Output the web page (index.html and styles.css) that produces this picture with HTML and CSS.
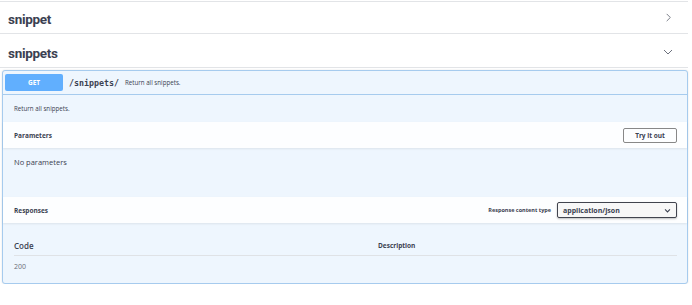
FILE: index.html
```html
<!DOCTYPE html>
<html lang="en">
<head>
  <meta charset="utf-8" />
  <title>Swagger UI</title>
  <link rel="stylesheet" href="styles.css">
</head>
<body>
  <div class="wrapper">
    <div class="prevTag"></div>

    <!-- TAG: snippet (collapsed) -->
    <h3 class="tag">
      <span>snippet</span>
      <svg class="arrow" width="9" height="9" viewBox="0 0 20 20"><path d="M6 2l8 8-8 8" fill="none" stroke="#3b4151" stroke-width="1.5"/></svg>
    </h3>

    <!-- TAG: snippets (open) -->
    <h3 class="tag">
      <span>snippets</span>
      <svg class="arrow" width="10" height="10" viewBox="0 0 20 20"><path d="M2 6l8 8 8-8" fill="none" stroke="#3b4151" stroke-width="1.5"/></svg>
    </h3>

    <!-- OPERATION -->
    <div class="opblock">
      <div class="summary">
        <span class="method">GET</span>
        <span class="path">/snippets/</span>
        <span class="summaryDesc">Return all snippets.</span>
      </div>

      <div class="desc">Return all snippets.</div>

      <div class="sectionHeader">
        <h4>Parameters</h4>
        <button class="tryBtn">Try it out</button>
      </div>
      <div class="paramsBody">No parameters</div>

      <div class="sectionHeader">
        <h4>Responses</h4>
        <div class="contentType">
          <label>Response content type</label>
          <div class="select">
            <span>application/json</span>
            <svg width="7" height="7" viewBox="0 0 20 20"><path d="M3 7l7 7 7-7" fill="none" stroke="#3b4151" stroke-width="3"/></svg>
          </div>
        </div>
      </div>
      <div class="responses">
        <div class="respHead">
          <span class="colCode">Code</span>
          <span class="colDesc">Description</span>
        </div>
        <div class="respRow">
          <span class="colCode status">200</span>
          <span class="colDesc"></span>
        </div>
      </div>
    </div>
  </div>
</body>
</html>
```

FILE: styles.css
```css
/* ========== GLOBAL ========== */
* {
  box-sizing: border-box;
  margin: 0;
  padding: 0;
}
body {
  background: #fff;
  font-family: "Open Sans", sans-serif;
  color: #3b4151;
}
.wrapper {
  width: 688px;
}

/* ========== TAGS ========== */
.prevTag {
  height: 2px;
  border-bottom: 1px solid #e2e4e7;
}
.tag {
  display: flex;
  align-items: center;
  justify-content: space-between;
  height: 32px;
  margin-bottom: 2px;
  padding: 0 15px 0 8px;
  border-bottom: 1px solid #e2e4e7;
  font-family: Roboto, sans-serif;
  font-weight: 700;
  font-size: 13.5px;
  letter-spacing: -0.3px;
  color: #3b4151;
}
.tag span {
  position: relative;
  top: 1px;
}

/* ========== OPBLOCK ========== */
.opblock {
  margin: 1px 0 0 2px;
  border: 1px solid #a6cbee;
  border-radius: 3px;
  background: #eef6fe;
  box-shadow: 0 0 2px rgba(0, 0, 0, 0.12);
}
.summary {
  display: flex;
  align-items: center;
  padding: 3px 2px;
  border-bottom: 1px solid #a6cbee;
}
.method {
  width: 58px;
  height: 17px;
  line-height: 17px;
  border-radius: 2px;
  background: #61affe;
  color: #fff;
  font-size: 6.5px;
  font-weight: 700;
  text-align: center;
}
.path {
  margin-left: 6px;
  font-family: "DejaVu Sans Mono", monospace;
  font-size: 8.3px;
  font-weight: 600;
  color: #3b4151;
}
.summaryDesc {
  margin-left: 6px;
  font-size: 6.2px;
  color: #3b4151;
}
.desc {
  height: 27px;
  padding: 9px 11px 0;
  font-size: 6.2px;
  color: #3b4151;
}

/* ========== SECTIONS ========== */
.sectionHeader {
  display: flex;
  align-items: center;
  justify-content: space-between;
  height: 26px;
  padding: 0 10px 0 11px;
  background: rgba(255, 255, 255, 0.85);
  box-shadow: 0 1px 2px rgba(0, 0, 0, 0.08);
}
.sectionHeader h4 {
  font-size: 6.5px;
  font-weight: 700;
  color: #3b4151;
}
.tryBtn {
  width: 54px;
  height: 15px;
  border: 1px solid #888;
  border-radius: 2px;
  background: transparent;
  font-family: "Open Sans", sans-serif;
  font-size: 6.5px;
  font-weight: 700;
  color: #3b4151;
}
.paramsBody {
  height: 49px;
  padding: 9px 11px 0;
  font-size: 7.5px;
  color: #3b4151;
}
.contentType {
  display: flex;
  align-items: center;
  gap: 6px;
}
.contentType label {
  font-size: 5.5px;
  font-weight: 700;
  color: #3b4151;
}
.select {
  display: flex;
  align-items: center;
  justify-content: space-between;
  width: 120px;
  height: 16px;
  padding: 0 5px 0 5px;
  border: 1.5px solid #41444e;
  border-radius: 2px;
  background: #f7f7f7;
  box-shadow: 0 1px 2px rgba(0, 0, 0, 0.25);
  font-size: 7px;
  font-weight: 700;
  color: #3b4151;
}

/* ========== RESPONSES ========== */
.responses {
  padding: 12px 10px 6px 11px;
}
.respHead {
  display: flex;
  align-items: center;
  height: 21px;
  border-bottom: 1px solid #dfe2e6;
}
.respHead .colCode {
  font-size: 8px;
  font-weight: 600;
}
.respHead .colDesc {
  font-size: 6.5px;
  font-weight: 700;
}
.colCode {
  width: 364px;
}
.respRow {
  display: flex;
  align-items: center;
  height: 21px;
}
.status {
  font-size: 7px;
  color: #6b6f78;
}
```
